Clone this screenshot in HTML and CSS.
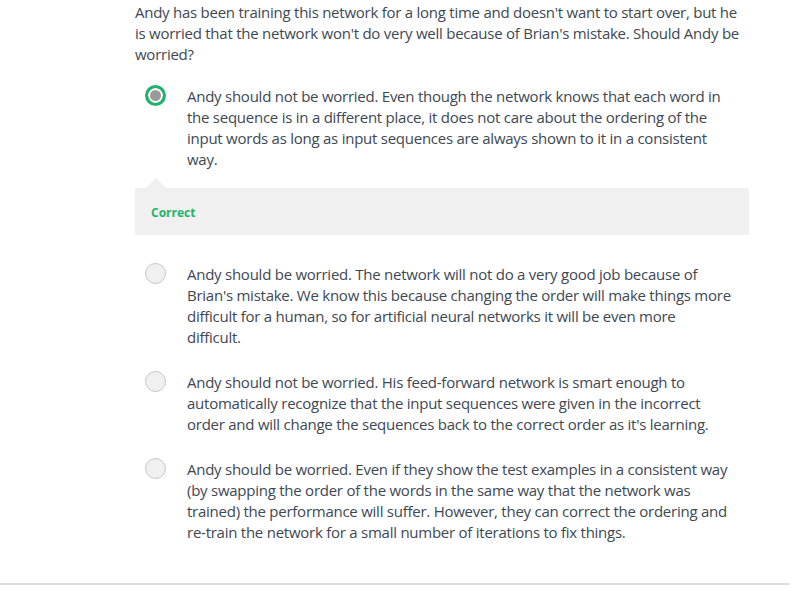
FILE: index.html
```html
<!DOCTYPE html>
<html>
<head>
<meta charset="utf-8">
<link rel="stylesheet" href="styles.css">
</head>
<body>
<div class="quiz">
  <p class="question">Andy has been training this network for a long time and doesn't want to start over, but he is worried that the network won't do very well because of Brian's mistake. Should Andy be worried?</p>
  <div class="options">
    <div class="option option-selected">
      <span class="radio radio-checked"></span>
      <span class="option-text">Andy should not be worried. Even though the network knows that each word in the sequence is in a different place, it does not care about the ordering of the input words as long as input sequences are always shown to it in a consistent way.</span>
    </div>
    <div class="feedback">
      <span class="feedback-label">Correct</span>
    </div>
    <div class="option">
      <span class="radio"></span>
      <span class="option-text">Andy should be worried. The network will not do a very good job because of Brian's mistake. We know this because changing the order will make things more difficult for a human, so for artificial neural networks it will be even more difficult.</span>
    </div>
    <div class="option">
      <span class="radio"></span>
      <span class="option-text">Andy should not be worried. His feed-forward network is smart enough to automatically recognize that the input sequences were given in the incorrect order and will change the sequences back to the correct order as it's learning.</span>
    </div>
    <div class="option">
      <span class="radio"></span>
      <span class="option-text">Andy should be worried. Even if they show the test examples in a consistent way (by swapping the order of the words in the same way that the network was trained) the performance will suffer. However, they can correct the ordering and re-train the network for a small number of iterations to fix things.</span>
    </div>
  </div>
</div>
<div class="divider"></div>
</body>
</html>
```

FILE: styles.css
```css
html, body {
  margin: 0;
  padding: 0;
  background: #ffffff;
}

body {
  font-family: "Open Sans", "Liberation Sans", sans-serif;
  font-size: 15px;
  letter-spacing: -0.25px;
  line-height: 21px;
  color: #3e4852;
}

.quiz {
  width: 614px;
  padding-left: 135px;
  padding-top: 2px;
}

.question {
  margin: 0;
}

.options {
  display: flex;
  flex-direction: column;
  margin-top: 21px;
}

.option {
  display: flex;
  align-items: flex-start;
  padding-left: 10px;
  margin-bottom: 24px;
}

.option-selected {
  margin-bottom: 0;
}

.option-text {
  width: 545px;
  margin-left: 21px;
}

.radio {
  flex: none;
  box-sizing: border-box;
  width: 21px;
  height: 21px;
  margin-top: -1px;
  border-radius: 50%;
  background: #f0f0f0;
  border: 1px solid #c6c6c6;
}

.radio-checked {
  background: #9a9a9a;
  border: 3px solid #1fb46b;
  box-shadow: inset 0 0 0 2px #ffffff;
}

.feedback {
  position: relative;
  margin-top: 18px;
  margin-bottom: 29px;
  height: 47px;
  background: #f0f0f0;
  display: flex;
  align-items: center;
  padding-left: 16px;
}

.feedback::before {
  content: "";
  position: absolute;
  left: 11px;
  top: -10px;
  width: 0;
  height: 0;
  border-left: 10px solid transparent;
  border-right: 10px solid transparent;
  border-bottom: 10px solid #f0f0f0;
}

.feedback-label {
  font-size: 12px;
  font-weight: 700;
  letter-spacing: 0;
  color: #1fb46b;
  margin-top: 1px;
}

.divider {
  width: 789px;
  height: 2px;
  background: #dcdcdc;
  margin-top: 16px;
}
```
